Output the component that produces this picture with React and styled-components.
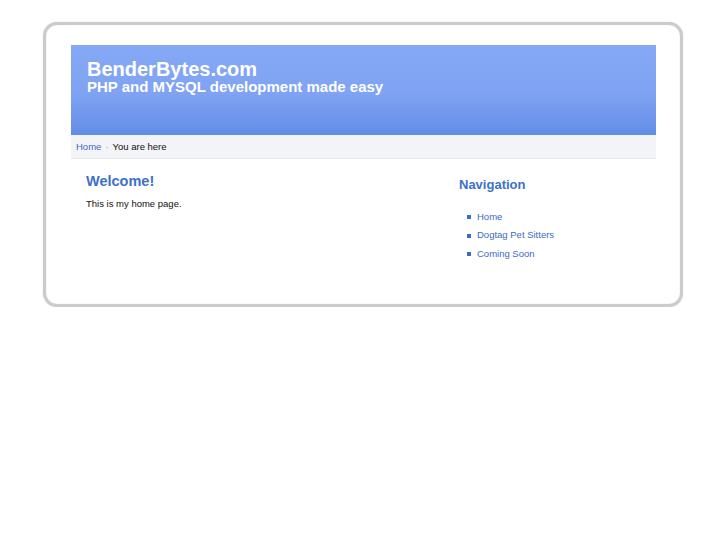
import styled, { createGlobalStyle } from "styled-components";

const GlobalStyle = createGlobalStyle`
  body {
    margin: 0;
    background: #fff;
    font-family: "Liberation Sans", Arial, sans-serif;
  }
`;

const navLinks = ["Home", "Dogtag Pet Sitters", "Coming Soon"];

const App = () => {
  return (
    <Page>
      <GlobalStyle />
      <Frame>
        <Banner>
          <SiteName>BenderBytes.com</SiteName>
          <Slogan>PHP and MYSQL development made easy</Slogan>
        </Banner>
        <Crumbs>
          <Link href="#">Home</Link>
          <Sep>·</Sep>
          <span>You are here</span>
        </Crumbs>
        <Body>
          <Main>
            <Heading>Welcome!</Heading>
            <Text>This is my home page.</Text>
          </Main>
          <Side>
            <SideHeading>Navigation</SideHeading>
            <NavList>
              {navLinks.map((label) => (
                <NavItem key={label}>
                  <Link href="#">{label}</Link>
                </NavItem>
              ))}
            </NavList>
          </Side>
        </Body>
      </Frame>
    </Page>
  );
};

export default App;

const Page = styled.div`
  padding: 22px 0 0 43px;
`;

const Frame = styled.div`
  box-sizing: border-box;
  width: 640px;
  height: 285px;
  border: 3px solid #cbcbcb;
  border-radius: 14px;
  box-shadow: 0 0 2px #e2e2e2, inset 0 0 1px #bbb;
  padding: 20px 24px 0 25px;
  background: #fff;
`;

const Banner = styled.div`
  height: 90px;
  box-sizing: border-box;
  padding: 14px 16px 0;
  background: linear-gradient(to bottom, #86a9f6 0%, #7fa2f2 55%, #628de6 100%);
  color: #fff;
`;

const SiteName = styled.div`
  font-size: 20px;
  font-weight: bold;
  line-height: 20px;
`;

const Slogan = styled.div`
  font-size: 15px;
  font-weight: bold;
  line-height: 15px;
`;

const Crumbs = styled.div`
  height: 23px;
  line-height: 23px;
  padding-left: 5px;
  font-size: 9.5px;
  color: #111;
  background: #f3f4f7;
  border-bottom: 1px solid #e3e5ea;
`;

const Sep = styled.span`
  color: #999;
  margin: 0 4px;
`;

const Link = styled.a`
  color: #3c6ac4;
  text-decoration: none;
`;

const Body = styled.div`
  display: flex;
  padding: 14px 0 0 15px;
`;

const Main = styled.div`
  width: 373px;
`;

const Heading = styled.h1`
  margin: 0;
  font-size: 14.5px;
  color: #3d70c8;
  line-height: 16px;
`;

const Text = styled.p`
  margin: 9px 0 0;
  font-size: 9.5px;
  color: #111;
`;

const Side = styled.div`
  padding-top: 4px;
`;

const SideHeading = styled.h2`
  margin: 0;
  font-size: 13px;
  color: #3d70c8;
  line-height: 16px;
`;

const NavList = styled.ul`
  list-style: none;
  margin: 14px 0 0;
  padding: 0;
`;

const NavItem = styled.li`
  display: flex;
  align-items: center;
  height: 18.5px;
  padding-left: 8px;
  font-size: 9.5px;

  &::before {
    content: "";
    width: 4px;
    height: 4px;
    background: #3d6cc4;
    margin: 2px 6px 0 0;
  }
`;
